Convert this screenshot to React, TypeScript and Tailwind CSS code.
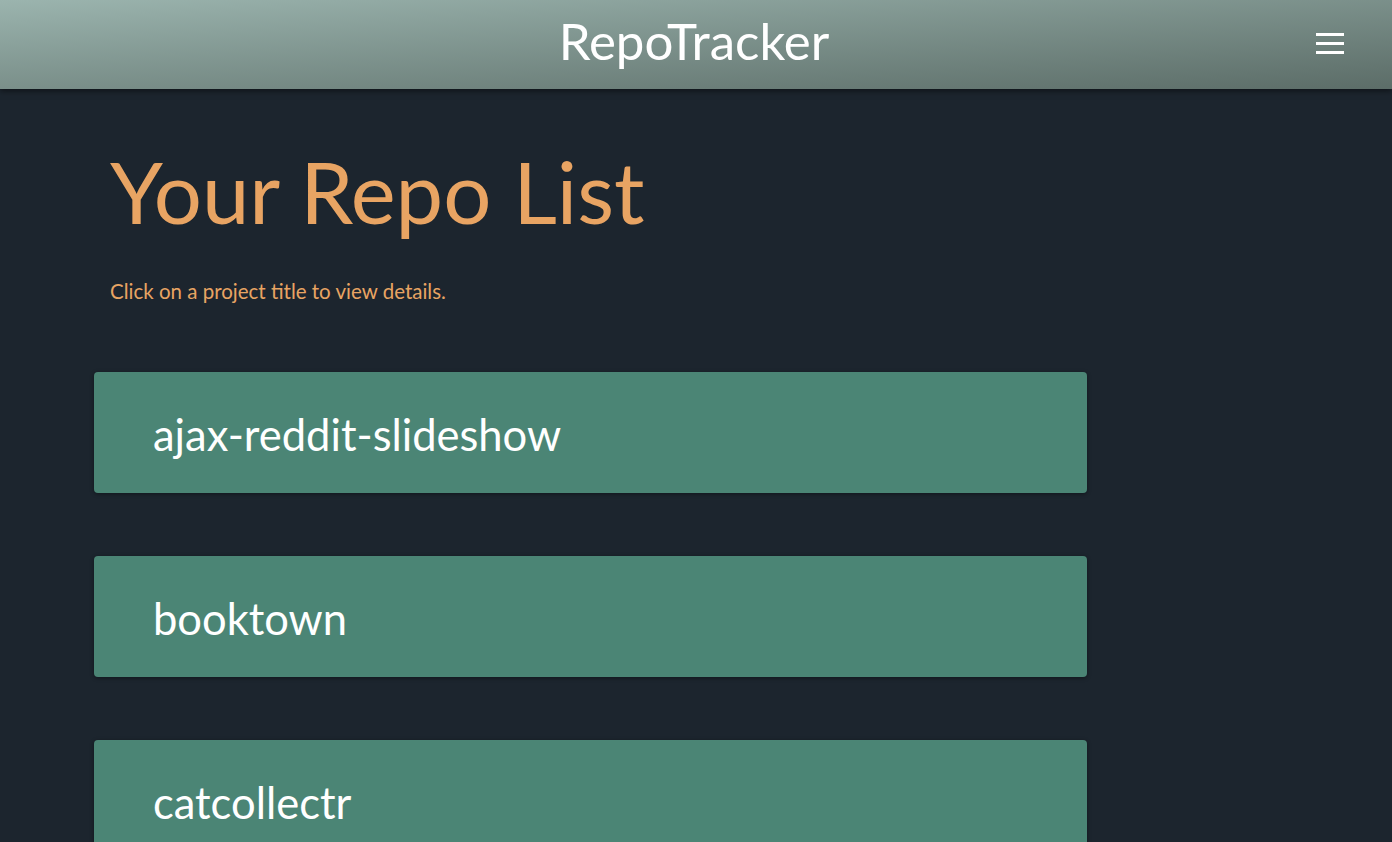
const repos = ["ajax-reddit-slideshow", "booktown", "catcollectr"]

function MenuIcon() {
  return (
    <div className="flex flex-col gap-[6px] w-[28px]">
      <span className="block h-[3px] bg-white" />
      <span className="block h-[3px] bg-white" />
      <span className="block h-[3px] bg-white" />
    </div>
  )
}

export default function App() {
  return (
    <div className="min-h-screen bg-[#1c252e] font-['Lato','Noto_Sans',sans-serif] overflow-hidden h-[842px]">
      <header className="relative h-[89px] flex items-center justify-center bg-gradient-to-br from-[#9bb4ae] to-[#5c6d68] shadow-[0_2px_6px_rgba(0,0,0,0.5)]">
        <h1 className="text-white text-[51px] leading-none pb-[8px] pr-[4px]">RepoTracker</h1>
        <button className="absolute right-[48px] top-[33px]">
          <MenuIcon />
        </button>
      </header>

      <main className="pl-[94px] w-[1087px]">
        <h2 className="pl-[16px] pt-[60px] text-[#e8a463] text-[85px] leading-none">Your Repo List</h2>
        <p className="pl-[16px] mt-[42px] text-[#e8a463] text-[20.5px]">Click on a project title to view details.</p>

        <ul className="mt-[65px] flex flex-col gap-[63px]">
          {repos.map((name) => (
            <li
              key={name}
              className="h-[121px] rounded-[4px] bg-[#4b8575] shadow-[0_1px_4px_rgba(0,0,0,0.4)] flex items-center pl-[59px] cursor-pointer"
            >
              <span className="text-white text-[43.5px] leading-none pt-[4px]">{name}</span>
            </li>
          ))}
        </ul>
      </main>
    </div>
  )
}
